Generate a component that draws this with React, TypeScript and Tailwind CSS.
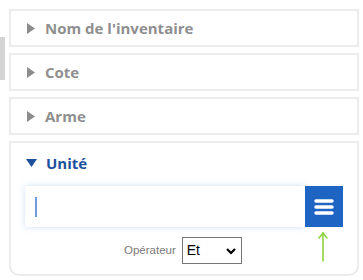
import React from 'react';

const TriRight: React.FC = () => (
  <svg width="8" height="11" viewBox="0 0 8 11">
    <path d="M0 0 L8 5.5 L0 11 Z" fill="#8c8c8c" />
  </svg>
);

const Closed: React.FC<{ label: string }> = ({ label }) => (
  <div className="h-[38px] border-2 border-[#ececec] bg-white flex items-center pl-[16px] gap-[10px]">
    <TriRight />
    <span className="text-[15px] font-bold text-[#8f8f8f]">{label}</span>
  </div>
);

export default function App() {
  return (
    <div className="w-[363px] h-[280px] bg-white relative font-['Open_Sans',sans-serif]">
      <div className="absolute left-0 top-[37px] w-[5px] h-[43px] bg-[#d4d4d4]" />
      <div className="pt-[9px] pl-[9px] pr-[4px] flex flex-col gap-[6px]">
        <Closed label="Nom de l'inventaire" />
        <Closed label="Cote" />
        <Closed label="Arme" />
        <div className="border-2 border-[#ececec] rounded-b-[10px] bg-white h-[135px]">
          <div className="h-[40px] flex items-center pl-[15px] gap-[9px]">
            <svg width="11" height="8" viewBox="0 0 11 8">
              <path d="M0 0 L11 0 L5.5 8 Z" fill="#1d4f9c" />
            </svg>
            <span className="text-[15px] font-bold text-[#1d4f9c]">Unité</span>
          </div>
          <div className="flex pl-[14px] pr-[14px] mt-[3px]">
            <div className="flex-1 h-[41px] bg-white shadow-[0_0_6px_rgba(120,160,230,0.35)] flex items-center pl-[10px]">
              <div className="w-[2px] h-[20px] bg-[#6f9be0]" />
            </div>
            <div className="w-[38px] h-[41px] bg-[#1e64c3] flex items-center justify-center">
              <svg width="22" height="20" viewBox="0 0 22 20">
                <g stroke="white" strokeWidth="3.4" strokeLinecap="round">
                  <line x1="3" y1="4" x2="19" y2="4" />
                  <line x1="3" y1="10" x2="19" y2="10" />
                  <line x1="3" y1="16" x2="19" y2="16" />
                </g>
              </svg>
            </div>
          </div>
          <div className="flex items-center mt-[10px] pl-[113px] relative">
            <span className="text-[11.5px] text-[#7a7a7a] font-['Liberation_Sans',sans-serif]">Opérateur</span>
            <div className="ml-[6px] w-[60px] h-[27px] border border-[#767676] flex items-center justify-between px-[4px] font-['Liberation_Sans',sans-serif] text-[14px] text-black">
              <span>Et</span>
              <svg width="12" height="8" viewBox="0 0 12 8">
                <path d="M2 2 L6 6 L10 2" stroke="black" strokeWidth="2.2" fill="none" />
              </svg>
            </div>
            <svg className="absolute left-[306px] top-[-6px]" width="12" height="32" viewBox="0 0 12 32">
              <g stroke="#8fd23c" strokeWidth="1.6" fill="none" strokeLinecap="round">
                <path d="M6 2 L6 30" />
                <path d="M2 7 L6 2 L10 7" />
              </g>
            </svg>
          </div>
        </div>
      </div>
    </div>
  );
}
